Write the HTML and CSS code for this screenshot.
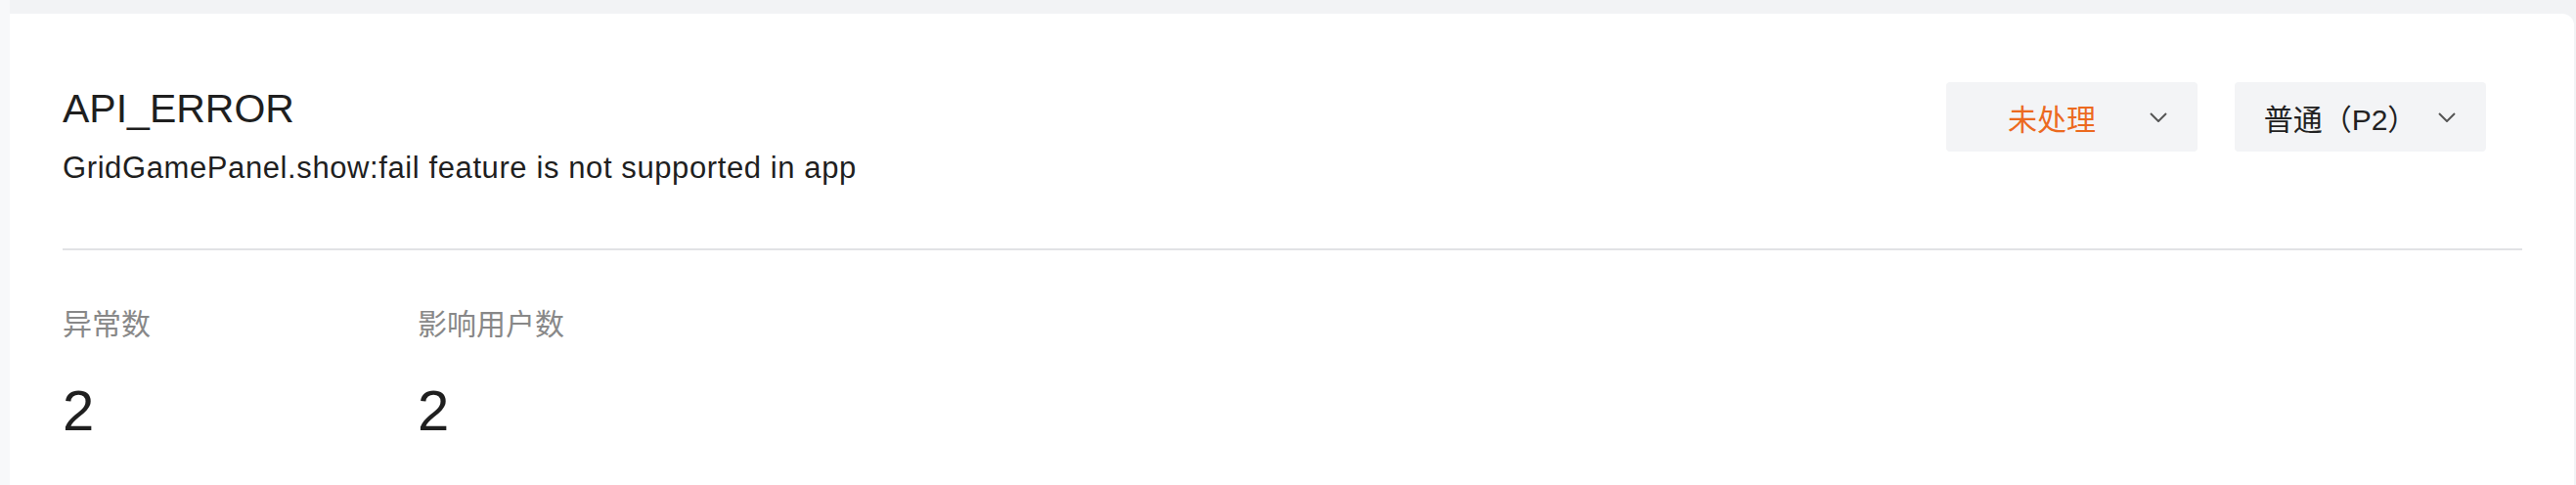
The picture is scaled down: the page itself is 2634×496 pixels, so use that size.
FILE: index.html
```html
<!DOCTYPE html>
<html lang="zh-CN">
<head>
    <meta charset="UTF-8">
    <title>API_ERROR - 异常详情</title>
    <link rel="stylesheet" href="styles.css">
</head>
<body>
    <div class="issue-card">
        <div class="issue-header">
            <div class="issue-title">
                <h1>API_ERROR</h1>
                <p class="issue-message">GridGamePanel.show:fail feature is not supported in app</p>
            </div>
            <div class="issue-actions">
                <div class="select-box status">
                    <span class="select-value">未处理</span>
                    <svg class="select-arrow" width="18" height="10" viewBox="0 0 18 10">
                        <polyline points="1,1 9,9 17,1" fill="none" stroke="#555" stroke-width="2"/>
                    </svg>
                </div>
                <div class="select-box">
                    <span class="select-value">普通（P2）</span>
                    <svg class="select-arrow" width="18" height="10" viewBox="0 0 18 10">
                        <polyline points="1,1 9,9 17,1" fill="none" stroke="#555" stroke-width="2"/>
                    </svg>
                </div>
            </div>
        </div>

        <div class="issue-stats">
            <div class="stat-item">
                <div class="stat-label">异常数</div>
                <div class="stat-value">2</div>
            </div>
            <div class="stat-item">
                <div class="stat-label">影响用户数</div>
                <div class="stat-value">2</div>
            </div>
        </div>
    </div>
</body>
</html>
```

FILE: styles.css
```css
* {
    margin: 0;
    padding: 0;
    box-sizing: border-box;
}

body {
    font-family: "Liberation Sans", "Noto Sans CJK SC", sans-serif;
    background-color: #f2f3f5;
    box-shadow: inset 10px 0 0 #f7f8fa;
    padding: 14px 2px 0 10px;
    height: 496px;
    overflow: hidden;
    color: #222;
}

.issue-card {
    background: #fff;
    border-top-right-radius: 12px;
    padding: 70px 53px 60px 54px;
    min-height: 482px;
}

.issue-header {
    display: flex;
    justify-content: space-between;
    align-items: flex-start;
    padding-bottom: 62px;
    border-bottom: 2px solid #e1e2e5;
}

.issue-title {
    padding-top: 5px;
}

.issue-title h1 {
    font-size: 41px;
    font-weight: 400;
    line-height: 44px;
    color: #1f1f1f;
}

.issue-message {
    margin-top: 19px;
    font-size: 31px;
    line-height: 40px;
    letter-spacing: 0.6px;
    color: #1f1f1f;
}

.issue-actions {
    display: flex;
    gap: 38px;
    margin-right: 37px;
}

.select-box {
    display: flex;
    align-items: center;
    width: 257px;
    height: 71px;
    padding: 0 31px 0 28px;
    background: #f3f4f6;
    border-radius: 4px;
}

.select-value {
    flex: 1;
    text-align: center;
    font-size: 30px;
    color: #222;
}

.select-box.status .select-value {
    color: #ec6a1f;
}

.select-arrow {
    flex-shrink: 0;
    margin-left: 20px;
}

.issue-stats {
    display: flex;
    padding-top: 61px;
}

.stat-item {
    width: 363px;
}

.stat-label {
    font-size: 30px;
    line-height: 30px;
    color: #888;
}

.stat-value {
    margin-top: 44px;
    font-size: 58px;
    line-height: 58px;
    color: #1f1f1f;
}
```
